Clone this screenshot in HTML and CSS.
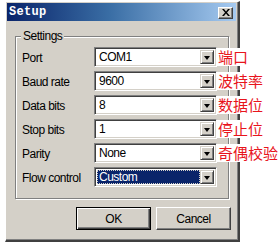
FILE: index.html
```html
<!DOCTYPE html>
<html>
<head>
<meta charset="utf-8">
<link rel="stylesheet" href="styles.css">
</head>
<body>
<div class="dialog">
  <div class="titlebar">
    <span class="title">Setup</span>
    <span class="close"><svg width="8" height="7" viewBox="0 0 8 7"><path d="M0 0h2l2 2.5L6 0h2L5 3.5 8 7H6L4 4.5 2 7H0l3-3.5z" fill="#000"/></svg></span>
  </div>
  <div class="group">
    <span class="legend">Settings</span>
    <div class="row"><span class="label">Port</span><span class="combo"><span class="value">COM1</span><span class="drop"></span></span><span class="note">端口</span></div>
    <div class="row"><span class="label">Baud rate</span><span class="combo"><span class="value">9600</span><span class="drop"></span></span><span class="note">波特率</span></div>
    <div class="row"><span class="label">Data bits</span><span class="combo"><span class="value">8</span><span class="drop"></span></span><span class="note">数据位</span></div>
    <div class="row"><span class="label">Stop bits</span><span class="combo"><span class="value">1</span><span class="drop"></span></span><span class="note">停止位</span></div>
    <div class="row"><span class="label">Parity</span><span class="combo"><span class="value">None</span><span class="drop"></span></span><span class="note">奇偶校验</span></div>
    <div class="row"><span class="label">Flow control</span><span class="combo"><span class="value selected"><span class="focus">Custom</span></span><span class="drop"></span></span></div>
  </div>
  <div class="buttons">
    <span class="btn default">OK</span>
    <span class="btn">Cancel</span>
  </div>
</div>
</body>
</html>
```

FILE: styles.css
```css
html, body {
  margin: 0;
  padding: 0;
  background: #fff;
}
body {
  font-family: "Liberation Sans", Arial, sans-serif;
  font-size: 12px;
  letter-spacing: -0.5px;
  color: #000;
}
.dialog {
  box-sizing: border-box;
  margin: 1px 0 0 5px;
  width: 235px;
  height: 241px;
  background: #d4d0c8;
  border-style: solid;
  border-width: 1px 2px 2px 1px;
  border-color: #fff #404040 #404040 #fff;
  box-shadow: inset -1px -1px 0 #808080;
  padding: 1px 2px 0 1px;
  display: flex;
  flex-direction: column;
}
.titlebar {
  height: 18px;
  background: linear-gradient(to right, #0a246a 0%, #3a6ea5 45%, #a6caf0 100%);
  display: flex;
  align-items: center;
  justify-content: space-between;
  padding: 0 3px 0 2px;
}
.title {
  font-family: "Liberation Mono", monospace;
  font-weight: bold;
  font-size: 12px;
  color: #fff;
  letter-spacing: 0.3px;
}
.close {
  box-sizing: border-box;
  width: 15px;
  height: 12px;
  background: #d4d0c8;
  border: 1px solid;
  border-color: #fff #404040 #404040 #fff;
  box-shadow: inset -1px -1px 0 #808080;
  display: flex;
  align-items: center;
  justify-content: center;
  margin-top: 1px;
}
.group {
  position: relative;
  margin: 15px 7px 0 8px;
  height: 163px;
  box-sizing: border-box;
  border: 1px solid #808080;
  box-shadow: 1px 1px 0 #fff, inset 1px 1px 0 #fff;
  padding: 10px 0 0 6px;
  display: flex;
  flex-direction: column;
  gap: 4px;
}
.legend {
  position: absolute;
  top: -8px;
  left: 5px;
  padding: 0 2px;
  background: #d4d0c8;
  line-height: 14px;
}
.row {
  display: flex;
  align-items: center;
  height: 20px;
}
.label {
  width: 72px;
  flex-shrink: 0;
  padding-top: 2px;
}
.combo {
  box-sizing: border-box;
  width: 123px;
  height: 20px;
  flex-shrink: 0;
  background: #fff;
  border: 1px solid;
  border-color: #808080 #fff #fff #808080;
  box-shadow: inset 1px 1px 0 #404040, inset -1px -1px 0 #d4d0c8;
  padding: 2px;
  display: flex;
}
.value {
  flex: 1;
  line-height: 14px;
  padding-left: 2px;
}
.value.selected {
  background: #0a246a;
  color: #fff;
  padding: 0;
  display: flex;
}
.focus {
  flex: 1;
  border: 1px dotted #d4d0c8;
  line-height: 12px;
  padding-left: 1px;
}
.drop {
  box-sizing: border-box;
  width: 14px;
  height: 14px;
  background: #d4d0c8;
  border: 1px solid;
  border-color: #d4d0c8 #404040 #404040 #d4d0c8;
  box-shadow: inset 1px 1px 0 #fff, inset -1px -1px 0 #808080;
  position: relative;
}
.drop::after {
  content: "";
  position: absolute;
  left: 3px;
  top: 5px;
  border-style: solid;
  border-width: 4px 3.5px 0 3.5px;
  border-color: #000 transparent transparent transparent;
}
.note {
  flex-shrink: 0;
  background: #fff;
  color: #e8141c;
  font-family: "Noto Sans CJK SC", sans-serif;
  font-size: 15px;
  letter-spacing: 0;
  line-height: 18px;
  padding: 0 1px;
}
.buttons {
  display: flex;
  justify-content: flex-end;
  gap: 5px;
  margin-top: 8px;
  padding-right: 5px;
}
.btn {
  box-sizing: border-box;
  width: 75px;
  height: 23px;
  display: flex;
  align-items: center;
  justify-content: center;
  border: 1px solid;
  border-color: #fff #404040 #404040 #fff;
  box-shadow: inset -1px -1px 0 #808080;
}
.btn.default {
  border: 1px solid #000;
  box-shadow: inset 1px 1px 0 #fff, inset -1px -1px 0 #404040, inset -2px -2px 0 #808080;
}
```
